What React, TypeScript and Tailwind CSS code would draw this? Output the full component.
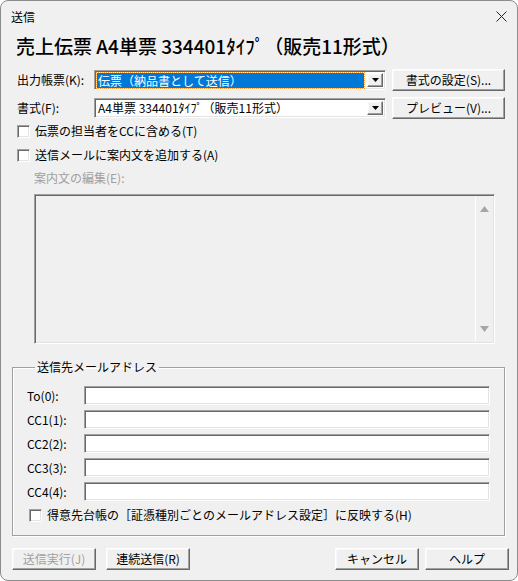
import React from "react";

const font = {
  fontFamily: '"Noto Sans CJK JP", "Liberation Sans", sans-serif',
};

// sunken 3D edge used by edit boxes, combos and checkboxes
const sunken =
  "border border-t-[#a0a0a0] border-l-[#a0a0a0] border-b-white border-r-white shadow-[inset_1px_1px_0_#696969,inset_-1px_-1px_0_#e3e3e3]";

// raised 3D edge used by push buttons
const raised =
  "border border-t-white border-l-white border-b-[#696969] border-r-[#696969] shadow-[inset_-1px_-1px_0_#a0a0a0,inset_1px_1px_0_#f8f8f8]";

function DropArrow() {
  return (
    <div
      className={`w-[16px] h-full flex items-center justify-center bg-[#f0f0f0] ${raised}`}
    >
      <svg width="7" height="4" viewBox="0 0 7 4">
        <path d="M0 0h7L3.5 4z" fill="#000" />
      </svg>
    </div>
  );
}

function Checkbox({ label }: { label: string }) {
  return (
    <div className="flex items-center h-[16px] gap-[5px]">
      <div className={`w-[13px] h-[13px] bg-white ${sunken}`} />
      <span className="text-[12px] leading-[16px] text-black">{label}</span>
    </div>
  );
}

function Button({
  label,
  width,
  disabled,
}: {
  label: string;
  width: string;
  disabled?: boolean;
}) {
  return (
    <div
      className={`${width} h-[22px] flex items-center justify-center bg-[#f0f0f0] ${raised} text-[12px] ${
        disabled ? "text-[#a0a0a0]" : "text-black"
      }`}
    >
      {label}
    </div>
  );
}

const addresses = ["To(0):", "CC1(1):", "CC2(2):", "CC3(3):", "CC4(4):"];

export default function App() {
  return (
    <div
      style={font}
      className="w-[518px] h-[581px] bg-[#f0f0f0] border border-[#8c8c8c] rounded-[8px] overflow-hidden flex flex-col text-black"
    >
      {/* title bar */}
      <div className="h-[31px] flex items-center justify-between pl-[10px] pr-[10px] shrink-0">
        <span className="text-[12px]">送信</span>
        <svg width="11" height="11" viewBox="0 0 11 11">
          <path d="M0.5 0.5l10 10M10.5 0.5l-10 10" stroke="#222" strokeWidth="1" />
        </svg>
      </div>

      <div className="pl-[15px] mt-[2px] h-[24px] text-[19px] leading-[24px] font-medium">
        売上伝票 A4単票 334401ﾀｲﾌﾟ（販売11形式）
      </div>

      {/* format rows */}
      <div className="mt-[11px] pl-[16px] flex items-center h-[22px]">
        <span className="w-[77px] text-[12px]">出力帳票(K):</span>
        <div className={`w-[292px] h-[20px] bg-white flex items-stretch p-[2px] ${sunken}`}>
          <div className="flex-1 flex items-center pr-[3px]">
            <div className="w-full h-[15px] bg-[#0078d7] outline outline-dotted outline-1 outline-[#ff9a2e] text-white text-[12px] leading-[15px] pl-[1px]">
              伝票（納品書として送信）
            </div>
          </div>
          <DropArrow />
        </div>
        <div className="ml-[6px]">
          <Button label="書式の設定(S)..." width="w-[113px]" />
        </div>
      </div>

      <div className="mt-[6px] pl-[16px] flex items-center h-[22px]">
        <span className="w-[77px] text-[12px]">書式(F):</span>
        <div className={`w-[292px] h-[20px] bg-white flex items-stretch p-[2px] ${sunken}`}>
          <div className="flex-1 flex items-center text-[12px] pl-[1px]">
            A4単票 334401ﾀｲﾌﾟ（販売11形式）
          </div>
          <DropArrow />
        </div>
        <div className="ml-[6px]">
          <Button label="プレビュー(V)..." width="w-[113px]" />
        </div>
      </div>

      <div className="mt-[4px] pl-[16px] flex flex-col gap-[8px]">
        <Checkbox label="伝票の担当者をCCに含める(T)" />
        <Checkbox label="送信メールに案内文を追加する(A)" />
      </div>

      <div className="mt-[7px] pl-[33px] h-[16px] text-[12px] leading-[16px] text-[#a0a0a0]">
        案内文の編集(E):
      </div>

      {/* disabled guide text box */}
      <div className={`mt-[8px] ml-[33px] w-[461px] h-[150px] flex bg-[#f0f0f0] p-[2px] ${sunken}`}>
        <div className="flex-1" />
        <div className="w-[17px] border-l border-white flex flex-col items-center justify-between py-[9px]">
          <svg width="9" height="6" viewBox="0 0 9 6">
            <path d="M4.5 0L9 6H0z" fill="#a6a6a6" />
          </svg>
          <svg width="9" height="6" viewBox="0 0 9 6">
            <path d="M0 0h9L4.5 6z" fill="#a6a6a6" />
          </svg>
        </div>
      </div>

      {/* address group */}
      <fieldset className="mt-[15px] ml-[11px] w-[493px] border border-[#a0a0a0] shadow-[inset_1px_1px_0_white,1px_1px_0_white] pl-[14px] pr-[13px] pb-[12px]">
        <legend className="ml-[8px] px-[2px] text-[12px] leading-[16px]">
          送信先メールアドレス
        </legend>
        <div className="mt-[11px] flex flex-col gap-[5px]">
          {addresses.map((a) => (
            <div key={a} className="flex items-center h-[19px]">
              <span className="w-[57px] text-[12px]">{a}</span>
              <div className={`w-[406px] h-[19px] bg-white ${sunken}`} />
            </div>
          ))}
        </div>
        <div className="mt-[6px] pl-[2px]">
          <Checkbox label="得意先台帳の［証憑種別ごとのメールアドレス設定］に反映する(H)" />
        </div>
      </fieldset>

      {/* bottom buttons */}
      <div className="mt-[12px] pl-[11px] pr-[8px] flex items-center">
        <Button label="送信実行(J)" width="w-[84px]" disabled />
        <div className="ml-[10px]">
          <Button label="連続送信(R)" width="w-[84px]" />
        </div>
        <div className="ml-auto flex gap-[6px]">
          <Button label="キャンセル" width="w-[84px]" />
          <Button label="ヘルプ" width="w-[84px]" />
        </div>
      </div>
    </div>
  );
}
